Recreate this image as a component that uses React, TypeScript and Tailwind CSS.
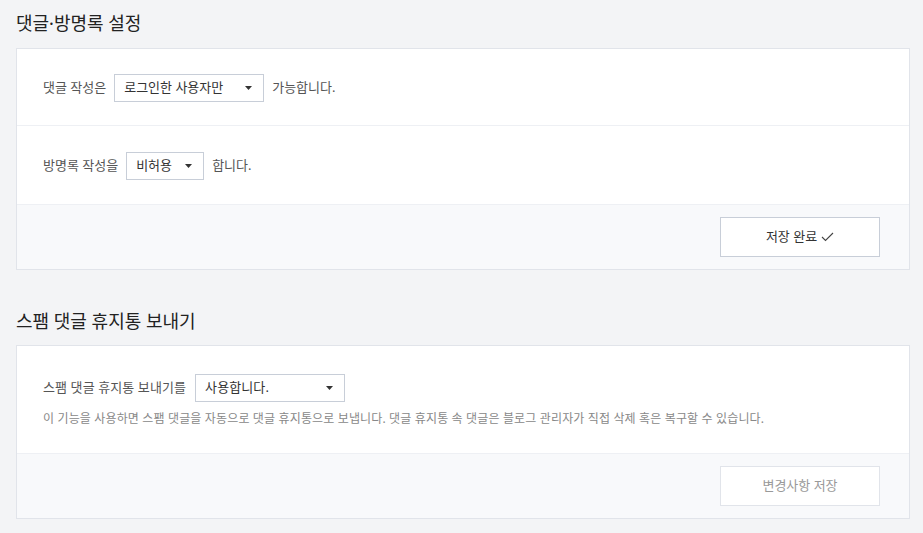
export default function App() {
  const font = { fontFamily: '"Noto Sans", "Noto Sans CJK KR", sans-serif' };
  return (
    <div
      className="min-h-[533px] w-full bg-[#f3f4f6] px-4 pt-[9px] text-[#333]"
      style={font}
    >
      <h2 className="h-[39px] text-[18px] leading-[28px] text-[#222]">댓글·방명록 설정</h2>
      <div className="w-[894px] border border-[#e1e4ea] bg-white">
        <div className="flex h-[77px] items-center gap-2 border-b border-[#eef0f4] px-[26px] pt-[2px] text-[13px] text-[#555]">
          <span>댓글 작성은</span>
          <Select label="로그인한 사용자만" width="w-[150px]" />
          <span>가능합니다.</span>
        </div>
        <div className="flex h-[78px] items-center gap-2 px-[26px] pt-[2px] text-[13px] text-[#555]">
          <span>방명록 작성을</span>
          <Select label="비허용" width="w-[78px]" />
          <span>합니다.</span>
        </div>
        <div className="flex h-[65px] items-center justify-end border-t border-[#eef0f4] bg-[#f8f9fb] pr-[29px]">
          <button className="flex h-[40px] w-[160px] items-center justify-center gap-1 border border-[#c8ced8] bg-white text-[13px] text-[#333]">
            저장 완료
            <svg width="13" height="10" viewBox="0 0 13 10" fill="none">
              <path d="M1 5l3.5 3.5L12 1" stroke="#444" strokeWidth="1.1" />
            </svg>
          </button>
        </div>
      </div>

      <h2 className="mt-[37px] h-[38px] text-[18px] leading-[28px] text-[#222]">스팸 댓글 휴지통 보내기</h2>
      <div className="w-[894px] border border-[#e1e4ea] bg-white">
        <div className="flex h-[107px] flex-col justify-center gap-[8px] px-[26px] pt-[3px]">
          <div className="flex items-center gap-[9px] text-[13px] tracking-[0.1px] text-[#555]">
            <span>스팸 댓글 휴지통 보내기를</span>
            <Select label="사용합니다." width="w-[150px]" />
          </div>
          <p className="text-[12px] tracking-[0.15px] text-[#888]">
            이 기능을 사용하면 스팸 댓글을 자동으로 댓글 휴지통으로 보냅니다. 댓글 휴지통 속 댓글은 블로그 관리자가 직접 삭제 혹은 복구할 수 있습니다.
          </p>
        </div>
        <div className="flex h-[65px] items-center justify-end border-t border-[#eef0f4] bg-[#f8f9fb] pr-[29px]">
          <button className="flex h-[40px] w-[160px] items-center justify-center border border-[#e1e4ea] bg-white text-[13px] text-[#999]">
            변경사항 저장
          </button>
        </div>
      </div>
    </div>
  );
}

function Select({ label, width }: { label: string; width: string }) {
  return (
    <div
      className={`flex h-[28px] ${width} items-center justify-between border border-[#c8ced8] bg-white pl-[9px] pr-[11px] text-[13px] text-[#333]`}
    >
      <span>{label}</span>
      <svg width="7" height="4" viewBox="0 0 7 4">
        <path d="M0 0h7L3.5 4z" fill="#333" />
      </svg>
    </div>
  );
}
